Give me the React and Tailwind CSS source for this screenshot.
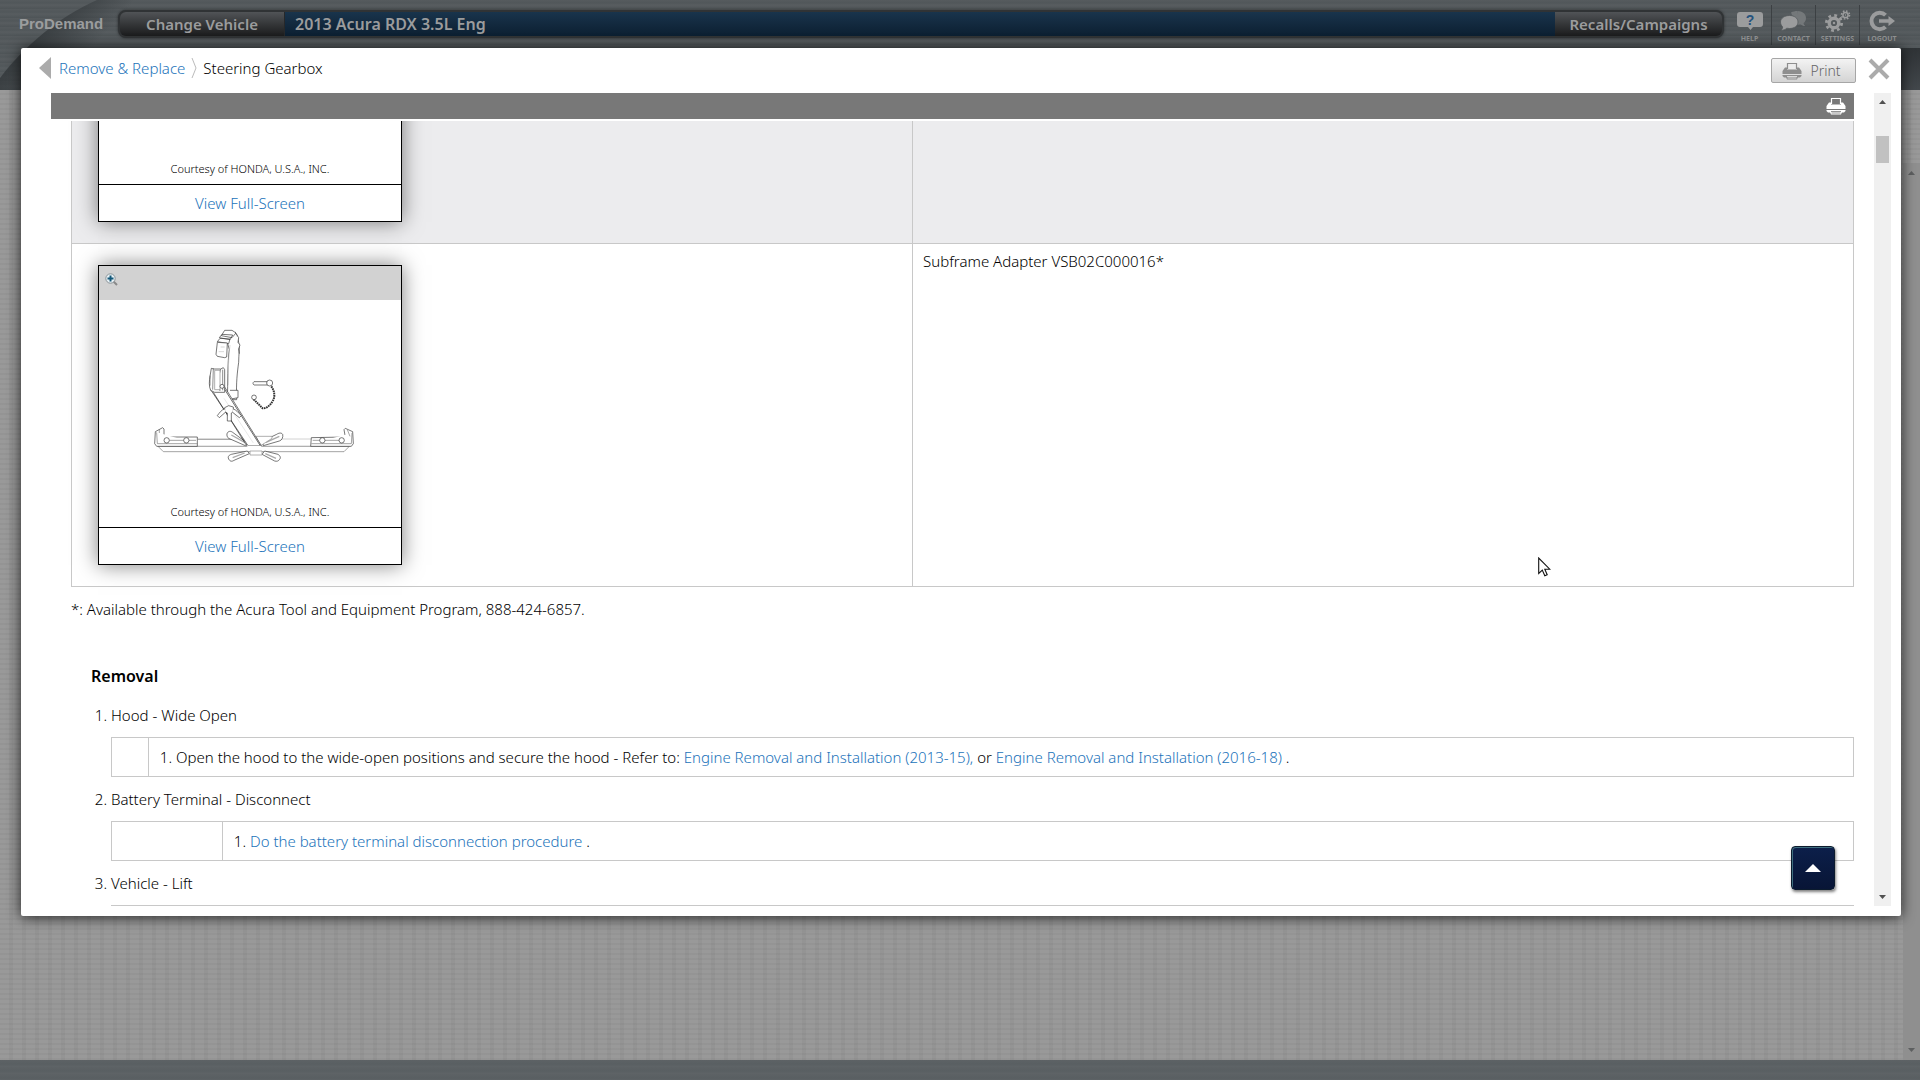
// src/App.jsx
import React, { useLayoutEffect, useRef } from 'react';

const ICON_COLOR = '#9b9c9d';

const PrinterIcon = ({ color, inner }) => (
    <svg width="20" height="18" viewBox="0 0 20 18" aria-hidden="true">
        <path d="M5.5 7V1.5h9V7" fill={inner} stroke={color} strokeWidth="1.2" />
        <path d="M3 5.5h2v2h10v-2h2L19.5 9v3h-19V9z" fill={color} />
        <path d="M.5 13h19v1l-1.5 1.5H2L.5 14z" fill={color} />
        <path d="M4 13.5h12V15l-1 2.5H5L4 15z" fill={color} />
        <path d="M5 14.5h10M5.5 16h9" stroke={inner} strokeWidth=".8" />
    </svg>
);

const HelpIcon = () => (
    <svg width="26" height="20" viewBox="0 0 26 20" aria-hidden="true">
        <path d="M3 1h20a3 3 0 0 1 3 3v9a3 3 0 0 1-3 3h-7l-2.500 3L11 16H3a3 3 0 0 1-3-3V4a3 3 0 0 1 3-3z" fill={ICON_COLOR} />
        <text x="13" y="14" textAnchor="middle" fontSize="14" fontWeight="700" fontFamily="Liberation Sans, sans-serif" fill="#25527d">?</text>
    </svg>
);

const ContactIcon = () => (
    <svg width="27" height="20" viewBox="0 0 27 20" aria-hidden="true">
        <path d="M17.500 0c5 0 8.500 3 8.500 7 0 2.400-1 4-2.500 5.200.2 1 .8 1.900 1.700 2.800-2 0-3.400-.6-4.500-1.500h-3z" fill="#74787a" />
        <path d="M11 1.500C13 .5 15 0 17.500 0l2 13-3.500 1z" fill="#74787a" />
        <path d="M9.500 4.500c5 0 8.500 2.800 8.500 6.500s-3.500 6.500-8.500 6.500c-1 0-1.900-.1-2.700-.3C5.500 18.500 3.500 19.300 1 19.300c1-.9 1.600-2 1.700-3.300C1.500 14.800.5 13 .5 11c0-3.700 4-6.500 9-6.500z" fill={ICON_COLOR} stroke="#54595c" strokeWidth=".8" />
    </svg>
);

const SettingsIcon = () => (
    <svg width="26" height="22" viewBox="0 0 26 22" fill="none" stroke={ICON_COLOR} aria-hidden="true">
        <circle cx="9" cy="13" r="4.800" strokeWidth="3.400" />
        <circle cx="9" cy="13" r="7.600" strokeWidth="2.800" strokeDasharray="2.800 3.169" />
        <circle cx="9" cy="13" r="1.200" fill={ICON_COLOR} stroke="none" />
        <circle cx="20.500" cy="5" r="2.600" strokeWidth="1.500" />
        <circle cx="20.500" cy="5" r="4" strokeWidth="1.600" strokeDasharray="1.600 1.542" />
        <circle cx="20.500" cy="5" r=".7" fill={ICON_COLOR} stroke="none" />
    </svg>
);

const LogoutIcon = () => (
    <svg width="26" height="22" viewBox="0 0 26 22" fill="none" aria-hidden="true">
        <path d="M16.500 5.200A8.200 8.200 0 1 0 16.500 16.800" stroke={ICON_COLOR} strokeWidth="4" />
        <path d="M10 9.300h9.500V6l6.500 5-6.500 5v-3.300H10z" fill={ICON_COLOR} />
    </svg>
);

const TOOLS = [
    { label: 'HELP', Icon: HelpIcon },
    { label: 'CONTACT', Icon: ContactIcon },
    { label: 'SETTINGS', Icon: SettingsIcon },
    { label: 'LOGOUT', Icon: LogoutIcon },
];

const Arrow = ({ down, color }) => (
    <svg width="7" height="4" viewBox="0 0 7 4" aria-hidden="true">
        <path d={down ? 'M0 0h7L3.500 4z' : 'M0 4h7L3.500 0z'} fill={color} />
    </svg>
);

// tool drawing: crossbar, arm, strap and lock pin
const SubframeAdapter = () => (
    <svg className="block w-full h-[200px]" viewBox="27 135 906 600" fill="#fff" stroke="#333" strokeWidth="2" strokeLinejoin="round" aria-hidden="true">
        {/* strap */}
        <path d="M412 262c6-14 16-24 24-30 8 8 6 20 10 30 4 20 0 36 0 60-4 30-8 60-6 112h-28c2-50 0-110 6-150z" />
        <path d="M404 226h22l12 8-12 14-32-6zM396 238l32 2-8 14-32-6zM390 250l30 2-4 14-34-6z" />
        <path d="M382 262l30 2-2 42-6 2-22-4-4-6z" />
        <path d="M438 236l8 12-2 14 6 8-4 12 2 14M420 406h24v22l-20 4" />
        <path d="M392 276h12M386 290h16M420 270c-6 40-4 80-6 120" stroke="#888" strokeWidth="1" />
        {/* crossbar */}
        <path d="M214 552h548v22H214z" stroke="#bbb" />
        <path d="M324 553h160" stroke="#777" />
        <path d="M204 574l16 16h542l16-16z" stroke="#777" />
        {/* handles behind the arm */}
        <path d="M416 530c-8 4-6 16 0 20l50 22 8-6-46-34c-4-3-8-4-12-2z" />
        <path d="M578 538c-4-6-12-4-18 0l-42 20 2 14 48-14c8-2 12-12 10-20z" />
        <path d="M416 612c-4-8 2-12 8-14l48-10 6 8-46 20c-6 4-12 4-16-4z" />
        <path d="M568 614c6-6 2-12-4-16l-40-10-8 10 38 20c6 2 12 0 14-4z" />
        <path d="M424 540l40 22M528 562l40-18M428 608l36-14M526 596l32 14" strokeWidth="4" stroke="#aaa" />
        <path d="M498 544h48v6l-34 22zM480 588h36v12h-36z" stroke="#888" />
        {/* arm */}
        <path d="M362 404l42-8 110 176h-40z" />
        <path d="M370 412l100 160M402 400l110 174" stroke="#222" />
        <path d="M402 430l88 134" stroke="#bbb" strokeWidth="1" />
        <path d="M472 574h42" stroke="#fff" strokeWidth="4" />
        {/* clamp */}
        <path d="M364 340l8 2h20l8-4 4 6v68h-30l-12-6c-6-12-4-30-2-42z" />
        <path d="M370 340l-2 64M392 342l-8 30 6 36M398 344v62M360 362v30" stroke="#555" />
        <path d="M374 346h16v58h-16z" stroke="#888" />
        <circle cx="396" cy="394" r="6" />
        {/* wing nut */}
        <path d="M404 458l12-6 14 4v14l-6 4v24h-12v-24l-8-4z" />
        <path d="M404 462c-10 2-16 12-22 20l6 6 18-16M430 462c8 2 16 12 24 20l-6 6-20-16" />
        {/* bracket left */}
        <path d="M196 530l22-12 4 4v24h100v28H200l-6-8z" />
        <path d="M200 532l2 34h120M238 556h80M208 522v12" stroke="#777" />
        <circle cx="230" cy="556" r="8" />
        <circle cx="289" cy="556" r="8" />
        {/* bracket right */}
        <path d="M788 530l-22-10-4 4 4 22-102 2-2 26h122l6-8z" />
        <path d="M786 534l-2 32H664M668 556h88M772 524l8 20" stroke="#777" />
        <circle cx="697" cy="556" r="8" />
        <circle cx="755" cy="556" r="8" />
        {/* lock pin and chain */}
        <path d="M492 380h40v10h-40c-4-3-4-7 0-10z" />
        <circle cx="539" cy="384" r="9" />
        <path d="M544 394c10 14 12 32 4 44-8 14-18 22-30 22l-28-28" fill="none" strokeWidth="6" strokeDasharray="5 2" />
        <circle cx="492" cy="427" r="7" />
    </svg>
);

const ZoomInIcon = () => (
    <svg width="13" height="13" viewBox="0 0 13 13" aria-hidden="true">
        <path d="M8.500 8.500l3.500 3.500" stroke="#8a8a8a" strokeWidth="2" />
        <circle cx="5.500" cy="5.500" r="4.700" fill="#e8f1f5" stroke="#8b9499" />
        <path d="M5.500 2.500v6M2.500 5.500h6" stroke="#15597a" strokeWidth="2" />
    </svg>
);

const FigureCard = ({ children }) => (
    <figure className="w-[304px] border border-black bg-white shadow-[0_0_20px_rgba(0,0,0,0.5)] text-center">
        <div className="h-[34px] bg-[#d2d2d2] pl-[6px] pt-[7px]">
            <ZoomInIcon />
        </div>
        <div className="h-[200px]">{children}</div>
        <figcaption className="h-[27px] text-[11px] leading-6 text-black">Courtesy of HONDA, U.S.A., INC.</figcaption>
        <a href="#full" className="block border-t border-black text-[15px] leading-9 text-[#2273ba]">View Full-Screen</a>
    </figure>
);

const StepTable = ({ spacer, children }) => (
    <table className="my-3 w-full h-10 border-collapse">
        <tbody>
            <tr>
                <td className={`border border-[#c8c8c8] ${spacer}`}></td>
                <td className="border border-[#c8c8c8] pl-[27px]">
                    <ol className="list-decimal">
                        <li>{children}</li>
                    </ol>
                </td>
            </tr>
        </tbody>
    </table>
);

const TopBar = () => (
    <header className="relative h-[90px] shrink-0 bg-[#4f5559]">
        <div className="absolute inset-0 bg-[repeating-linear-gradient(180deg,#565b5e_0px,#51575a_3px,#585d60_5px,#4e5457_9px)]"></div>
        <div className="absolute right-0 top-12 w-1/2 h-[42px] bg-linear-to-b from-[#2f3336] to-[#42474b]"></div>
        <svg className="absolute left-0 top-0" width="180" height="90" aria-hidden="true">
            <defs>
                <linearGradient id="sweep" gradientUnits="userSpaceOnUse" x1="44" y1="30" x2="80" y2="62">
                    <stop offset="0" stopColor="#33383b" stopOpacity=".8" />
                    <stop offset="1" stopColor="#33383b" stopOpacity="0" />
                </linearGradient>
            </defs>
            <path d="M97 0C60 16 24 46 0 78v12h90L180 0z" fill="url(#sweep)" />
        </svg>
        <div className="relative flex h-12 items-start">
            <div className="w-[118px] pl-[19px] pt-3 text-[15px] leading-6 font-bold font-['Liberation_Sans',sans-serif] text-[#9b9d9e]">ProDemand</div>
            <nav className="mt-[10px] flex flex-1 rounded-lg border-2 border-[#303335] bg-[#303335] shadow-[0_0_3px_rgba(0,0,0,0.5)] text-[15px] leading-6 font-semibold text-[#9b9c9d]">
                <button className="w-[164px] rounded-l-md bg-linear-to-b from-[#515457] to-[#1b1c1d] shadow-[1px_0_0_#26282a]">Change Vehicle</button>
                <div className="flex-1 ml-px pl-[10px] text-base leading-6 bg-linear-to-b from-[#19344c] to-[#0c1f31]">2013 Acura RDX 3.5L Eng</div>
                <button className="w-[167px] rounded-r-md bg-linear-to-b from-[#515457] to-[#1b1c1d]">Recalls/Campaigns</button>
            </nav>
            <div className="ml-1 mr-4 mt-[5px] flex divide-x divide-[#3c4043]">
                {TOOLS.map(({ label, Icon }) => (
                    <button key={label} className="flex h-10 w-11 flex-col items-center justify-between text-[7px] leading-3 font-bold text-[#919394]">
                        <span className="flex h-7 items-center pt-1"><Icon /></span>
                        {label}
                    </button>
                ))}
            </div>
        </div>
    </header>
);

export default function App() {
    const pane = useRef(null);

    useLayoutEffect(() => {
        pane.current.scrollTop = 221;
    }, []);

    return (
        <div className="relative flex h-screen flex-col overflow-hidden font-['Noto_Sans',sans-serif] text-[15px] leading-5 font-light text-black">
            <TopBar />

            {/* page behind the dialog */}
            <div className="flex flex-1 bg-[#979797] bg-[repeating-linear-gradient(180deg,transparent_0px,transparent_3px,rgba(0,0,0,0.03)_3px,rgba(0,0,0,0.03)_5px),repeating-linear-gradient(90deg,rgba(255,255,255,0.02)_0px,rgba(255,255,255,0.02)_9px,rgba(0,0,0,0.02)_9px,rgba(0,0,0,0.02)_13px)]">
                <div className="ml-auto mt-[73px] flex w-[17px] flex-col items-center justify-between bg-[#8f8f8f] py-2">
                    <Arrow color="#5d5f60" />
                    <Arrow down color="#5d5f60" />
                </div>
            </div>
            <footer className="h-5 shrink-0 bg-[repeating-linear-gradient(180deg,#5d6265_0px,#595f62_4px,#5f6467_7px)]"></footer>

            <main className="absolute left-[21px] right-[19px] top-12 bottom-[164px] flex flex-col rounded-xs bg-white pb-[10px] shadow-[0_1px_14px_rgba(0,0,0,0.8)]">
                <div className="flex h-[45px] shrink-0 items-start pl-[18px] pr-[11px] leading-[22px]">
                    <nav className="flex pt-[9px]">
                        <svg width="12" height="22" aria-hidden="true"><path d="M12 0v22L0 11z" fill="#ababab" /></svg>
                        <a href="#back" className="ml-2 text-[#2273ba]">Remove &amp; Replace</a>
                        <svg className="mx-[6px]" width="6" height="22" fill="none" aria-hidden="true"><path d="M1 1l4 10-4 10" stroke="#bbb" /></svg>
                        <span>Steering Gearbox</span>
                    </nav>
                    <button className="ml-auto mt-[10px] flex h-[25px] w-[85px] items-center justify-center gap-2 rounded-xs border border-[#a6a6a6] bg-linear-to-b from-[#f3f3f3] to-[#d4d4d4] pr-1 text-sm text-[#666]">
                        <PrinterIcon color="#8e8e8e" inner="#ececec" />
                        Print
                    </button>
                    <button className="ml-3 mt-[10px]" aria-label="Close">
                        <svg width="22" height="22" aria-hidden="true"><path d="M2 2l18 18M20 2L2 20" stroke="#ababab" strokeWidth="4" /></svg>
                    </button>
                </div>

                <div className="flex min-h-0 flex-1 pl-[30px] pr-[10px]">
                    <div className="flex min-w-0 flex-1 flex-col">
                        <div className="mb-[2px] flex h-[26px] shrink-0 items-center justify-end bg-[#787878] pr-2">
                            <button aria-label="Print section"><PrinterIcon color="#fff" inner="#787878" /></button>
                        </div>
                        <div ref={pane} className="min-h-0 flex-1 overflow-hidden pl-5">
                            <table className="w-full border-collapse table-fixed">
                                <tbody>
                                    <tr className="bg-[#ececee]">
                                        <td className="w-[47.2%] border border-[#c8c8c8] py-[21px] pl-[26px]">
                                            <FigureCard />
                                        </td>
                                        <td className="border border-[#c8c8c8]"></td>
                                    </tr>
                                    <tr>
                                        <td className="border border-[#c8c8c8] py-[21px] pl-[26px]">
                                            <FigureCard><SubframeAdapter /></FigureCard>
                                        </td>
                                        <td className="border border-[#c8c8c8] pl-[10px] pt-[7px] align-top">Subframe Adapter VSB02C000016*</td>
                                    </tr>
                                </tbody>
                            </table>
                            <p className="mt-3">*: Available through the Acura Tool and Equipment Program, 888-424-6857.</p>
                            <h2 className="mt-[46px] mb-[18px] pl-5 text-base leading-[22px] font-semibold">Removal</h2>
                            <ol className="list-decimal pl-10">
                                <li>
                                    Hood - Wide Open
                                    <StepTable spacer="w-[37px]">
                                        Open the hood to the wide-open positions and secure the hood - Refer to:{' '}
                                        <a href="#2013" className="text-[#2273ba]">Engine Removal and Installation (2013-15),</a> or{' '}
                                        <a href="#2016" className="text-[#2273ba]">Engine Removal and Installation (2016-18)</a> .
                                    </StepTable>
                                </li>
                                <li>
                                    Battery Terminal - Disconnect
                                    <StepTable spacer="w-[111px]">
                                        <a href="#battery" className="text-[#2273ba]">Do the battery terminal disconnection procedure</a> .
                                    </StepTable>
                                </li>
                                <li>
                                    Vehicle - Lift
                                    <div className="mt-3 h-10 border border-[#c8c8c8]"></div>
                                </li>
                            </ol>
                        </div>
                    </div>
                    <div className="ml-5 flex w-[17px] flex-col items-center justify-between bg-[#f0f0f0] py-[7px]">
                        <Arrow color="#505050" />
                        <div className="mt-8 mb-auto h-[27px] w-[13px] bg-[#c1c1c1]"></div>
                        <Arrow down color="#505050" />
                    </div>
                </div>

                <button aria-label="Back to top" className="absolute bottom-[26px] right-[66px] flex size-11 items-center justify-center rounded-sm border border-[#0c1b2e] bg-linear-to-b from-[#0c1f4a] to-[#081536] shadow-[inset_1px_1px_0_#3f6f80,1px_2px_3px_rgba(0,0,0,0.5)]">
                    <svg width="16" height="8" aria-hidden="true"><path d="M0 8h16L8 0z" fill="#fff" /></svg>
                </button>
            </main>

            {/* mouse pointer */}
            <svg className="absolute left-[1538px] top-[557px]" width="13" height="20" viewBox="0 0 13 20" aria-hidden="true">
                <path d="M.7 1v15.500l3.600-3.400 2.500 5.700 2.400-1L6.800 12.200h5z" fill="#fff" stroke="#111" strokeWidth="1.100" />
            </svg>
        </div>
    );
}
